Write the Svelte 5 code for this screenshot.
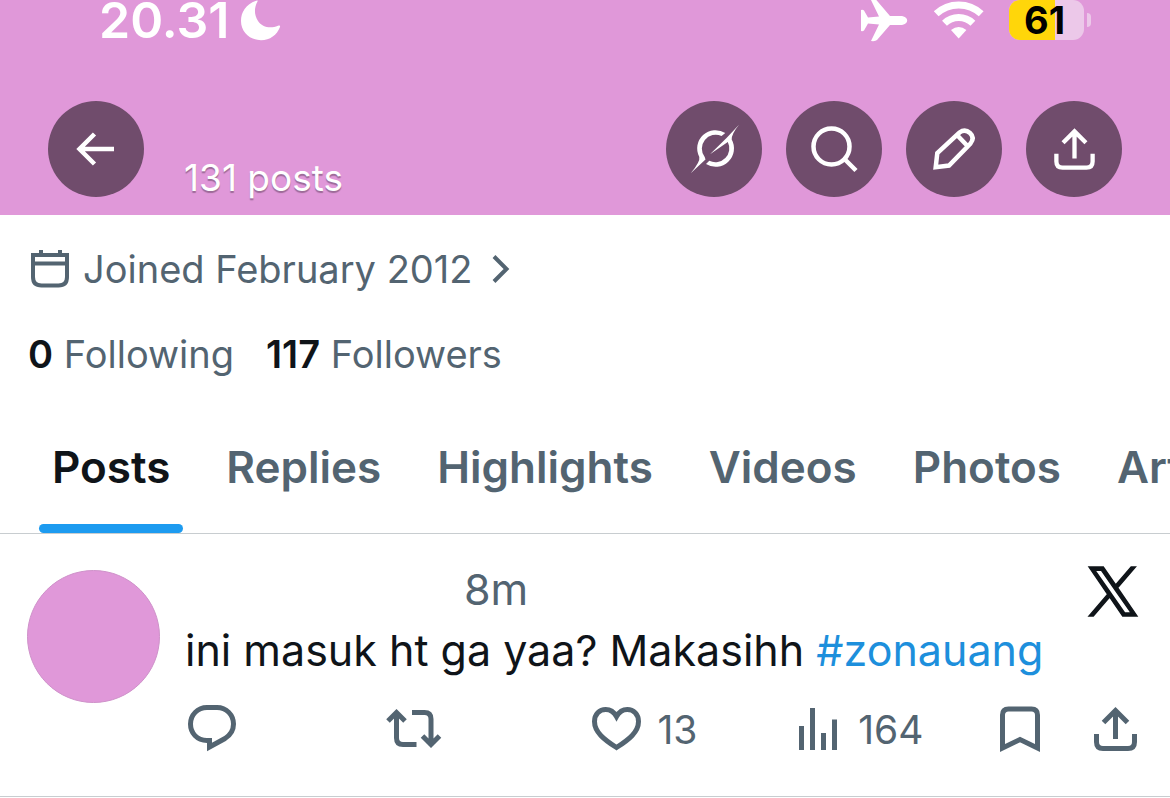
<script>
  const battery = 61;

  const tabs = ['Posts', 'Replies', 'Highlights', 'Videos', 'Photos', 'Articles'];
  let activeTab = $state('Posts');

  const profile = { posts: 131, joined: 'February 2012', following: 0, followers: 117 };
  const post = { age: '8m', text: 'ini masuk ht ga yaa? Makasihh', tag: 'zonauang', likes: 13, views: 164 };
</script>

{#snippet shareIcon()}
  <svg class="line" width="43" height="44" viewBox="0 0 43 44">
    <path d="M2.500 27v8q0 6.500 6.500 6.500h25q6.500 0 6.500-6.500v-8M21.500 4v28M9.500 15.500l12-12 12 12" />
  </svg>
{/snippet}

<header>
  <div class="status">
    <span class="time">20.31</span>
    <svg class="moon" width="40" height="41" viewBox="0 0 40 41">
      <path d="M16 .5C5 4 0 12 0 21c0 11 9 19.200 20 19.200 9 0 16-5.200 19-13.200.5-1.700-.5-1.800-2-1.200C29 29 21 27 17 21c-4-6-4-13-.5-19.500.3-1 .1-1.200-.5-1z" />
    </svg>
    <svg class="plane" width="47" height="42" viewBox="0 0 47 42">
      <path d="M9.500-1h5L29 16h12q5.200 1.300 5.200 4.500T41 25H29L16 40q-1.500 1.500-6 1l8-16.500-11-1-4 7q-1.200 1-3 .5V10q2-.5 3 .5l4 7 11-1z" />
    </svg>
    <svg class="wifi" width="50" height="39" viewBox="0 0 50 39">
      <path class="arc" d="M2.200 13.800A33 33 0 0 1 47.200 13.800M10.500 23.300A20.500 20.500 0 0 1 38.900 23.300" />
      <path d="M24.700 38.500 17 30q7.700-6 15.400 0z" />
    </svg>
    <div class="battery">
      <div class="cell">
        <div class="charge" style="width: {battery}%"></div>
        <span>{battery}</span>
      </div>
      <div class="nub"></div>
    </div>
  </div>

  <nav class="bar">
    <button class="round" aria-label="Back">
      <svg class="line" width="38" height="34" viewBox="0 0 38 34">
        <path d="M37 17H3.500M17.500 2l-15 15 15 15" />
      </svg>
    </button>
    <span class="count">{profile.posts} posts</span>
    <button class="round" aria-label="Profile summary">
      <svg width="50" height="50" viewBox="0 0 50 50">
        <path d="M36.300 9A18.300 18.300 0 0 0 10.300 33Q11.500 37.500 1.700 49.300L16.500 35.500 15.700 33A13.900 13.900 0 0 1 32.500 11.900z" />
        <path d="M50 .8Q42.500 10 42.700 15.600A18.300 18.300 0 0 1 17 40L20.300 36.800A13.900 13.900 0 0 0 38.800 18L21 30.300 37.500 14z" />
      </svg>
    </button>
    <button class="round" aria-label="Search">
      <svg class="line" width="47" height="47" viewBox="0 0 47 47">
        <circle cx="20.500" cy="20.500" r="18" />
        <path d="M33 32.500l12 12" />
      </svg>
    </button>
    <button class="round" aria-label="Edit profile">
      <svg class="line" width="42" height="42" viewBox="0 0 42 42">
        <path d="M2.700 39.200 4.300 25 26.500 4.500q5.500-4 10.500.5t.5 10.500L16 37.500zM24 7l11 11.500" />
      </svg>
    </button>
    <button class="round share" aria-label="Share profile">{@render shareIcon()}</button>
  </nav>
</header>

<section class="profile">
  <button class="joined">
    <svg class="line" width="39" height="40" viewBox="0 0 39 40">
      <path d="M3 6h34v22q0 8.500-8.500 8.500h-17Q3 36.500 3 28zM3 14.500h34M11 1v5M30 1v5" />
    </svg>
    <span>Joined {profile.joined}</span>
    <svg class="line" width="17" height="30" viewBox="0 0 17 30">
      <path d="M2 2.500 14.500 15 2 27.500" />
    </svg>
  </button>
  <div class="stats">
    <a href="#following"><b>{profile.following}</b> Following</a>
    <a href="#followers"><b>{profile.followers}</b> Followers</a>
  </div>
</section>

<div class="tabs" role="tablist">
  {#each tabs as tab}
    <button role="tab" class:active={activeTab === tab} aria-selected={activeTab === tab} onclick={() => (activeTab = tab)}>
      {tab}
    </button>
  {/each}
</div>

<article>
  <div class="avatar"></div>
  <div class="body">
    <div class="meta">
      <span class="age">{post.age}</span>
      <svg class="logo" width="48" height="49" viewBox="0 0 1200 1227">
        <path d="M714 519 1161 0H1055L667 451 357 0H0l468 682L0 1226h106l409-476 328 476h357zM569 688l-47-68L144 80h163l304 436 48 68 396 566H892z" />
      </svg>
    </div>
    <p>{post.text} <a href="#{post.tag}">#{post.tag}</a></p>
    <div class="actions">
      <button aria-label="Reply">
        <svg class="line" width="54" height="48" viewBox="-3 0 54 48">
          <path d="M21.500 35.500H19C9 35.500 2.500 28 2.500 19S9.500 2.500 19 2.500h10c9.500 0 16.500 7.500 16.500 16.500 0 6-3 11-8.500 14.500L21.500 42z" />
        </svg>
      </button>
      <button aria-label="Repost">
        <svg class="line" width="56" height="44" viewBox="3 0 56 44">
          <path d="M2 14l8.500-8.500L19 14M10.500 6.500V31q0 6.500 6.500 6.500h13.500M26 5.500h12.500q6.500 0 6.500 6.500v25M36.500 29l8.500 8.500 8.500-8.500" />
        </svg>
      </button>
      <button aria-label="Like">
        <svg class="line" width="49" height="46" viewBox="1 0 49 46">
          <path d="M24.500 41.500C12 33.500 2.500 26 2.500 15.500c0-7.500 5-12 11.200-12 5 0 8.300 2.500 10.800 7 2.500-4.500 5.800-7 10.800-7 6.200 0 11.200 4.500 11.200 12 0 10.500-9.500 18-22 26z" />
        </svg>
        <span>{post.likes}</span>
      </button>
      <button aria-label="Views">
        <svg class="line" width="46" height="44" viewBox="-3 0 46 44">
          <path d="M2.500 19v24M13.500 1v42M24.500 26v17M35.500 12.500V43" />
        </svg>
        <span>{post.views}</span>
      </button>
      <button class="save" aria-label="Bookmark">
        <svg class="line" width="40" height="47" viewBox="0 0 40 47">
          <path d="M2.500 42V9q0-6 6-6h23q6 0 6 6v33L20 33.500z" />
        </svg>
      </button>
      <button aria-label="Share post">{@render shareIcon()}</button>
    </div>
  </div>
</article>

<style>
  :global(body) {
    margin: 0;
    background: #fff;
    color: #0f1419;
    font-family: Inter, "Liberation Sans", sans-serif;
    overflow-x: hidden;
  }

  button {
    font: inherit;
    color: inherit;
    background: none;
    border: 0;
    padding: 0;
    cursor: pointer;
  }

  a {
    color: inherit;
    text-decoration: none;
  }

  svg {
    display: block;
    flex: none;
    fill: currentColor;
    overflow: visible;
  }

  .line {
    fill: none;
    stroke: currentColor;
    stroke-width: 5;
  }

  header {
    background: #e098d9;
    color: #fff;
    padding-bottom: 18px;
  }

  .status {
    display: flex;
    align-items: flex-start;
    height: 40px;
    padding: 0 79px 0 99px;
  }

  .time {
    font-size: 50px;
    font-weight: 600;
    line-height: 40px;
  }

  .moon {
    margin-left: 12px;
  }

  .plane {
    margin-left: auto;
    overflow: hidden;
  }

  .wifi {
    margin: 0 25px 0 26px;
  }

  .wifi .arc {
    fill: none;
    stroke: currentColor;
    stroke-width: 7;
  }

  .battery {
    display: flex;
    align-items: center;
    gap: 3px;
  }

  .cell {
    position: relative;
    box-sizing: border-box;
    width: 75px;
    height: 40px;
    padding-right: 4px;
    border-radius: 11px;
    overflow: hidden;
    background: #ecc8e9;
    color: #000;
    text-align: center;
  }

  .charge {
    position: absolute;
    inset: 0 auto 0 0;
    background: #ffd60a;
  }

  .cell span {
    position: relative;
    font-size: 38px;
    font-weight: 700;
    line-height: 40px;
  }

  .nub {
    width: 4px;
    height: 14px;
    border-radius: 0 6px 6px 0;
    background: #ecc8e9;
  }

  .bar {
    display: flex;
    align-items: center;
    gap: 24px;
    padding: 61px 48px 0;
  }

  .round {
    display: flex;
    align-items: center;
    justify-content: center;
    width: 96px;
    height: 96px;
    border-radius: 50%;
    background: #704c6c;
  }

  .round .line {
    stroke-width: 4.5;
  }

  .share :global(svg) {
    width: 41px;
    height: 42px;
  }

  .count {
    flex: 1;
    align-self: flex-end;
    padding-left: 16px;
    font-size: 37px;
    line-height: 38px;
    text-shadow: 0 2px 1px rgba(0, 0, 0, 0.3);
  }

  .profile {
    padding: 31px 28px 0 30px;
    font-size: 38px;
    line-height: 46px;
    color: #536471;
  }

  .joined {
    display: flex;
    align-items: center;
    gap: 14px;
  }

  .joined span {
    margin-right: 6px;
  }

  .joined .line {
    stroke-width: 4;
  }

  .stats {
    display: flex;
    gap: 32px;
    margin: 39px 0 0 -2px;
  }

  .stats b {
    font-weight: 600;
    color: #0f1419;
  }

  .tabs {
    display: flex;
    gap: 30px;
    margin-top: 39px;
    padding-left: 39px;
    overflow: hidden;
    border-bottom: 1px solid #c8cdd0;
  }

  .tabs button {
    flex: none;
    padding: 24px 13px 30px;
    border-bottom: 9px solid transparent;
    font-size: 44px;
    font-weight: 600;
    line-height: 54px;
    color: #536471;
    position: relative;
  }

  .tabs .active {
    color: #0f1419;
  }

  .tabs .active::after {
    content: "";
    position: absolute;
    inset: auto 0 -9px;
    height: 9px;
    border-radius: 5px;
    background: #1d9bf0;
  }

  article {
    display: flex;
    gap: 25px;
    padding: 30px 33px 42px 27px;
    border-bottom: 1px solid #c8cdd0;
  }

  .avatar {
    flex: none;
    box-sizing: border-box;
    width: 133px;
    height: 133px;
    margin-top: 6px;
    border: 1px solid #cf92ca;
    border-radius: 50%;
    background: #e098d9;
  }

  .body {
    flex: 1;
    min-width: 0;
    font-size: 43px;
  }

  .meta {
    display: flex;
    align-items: flex-start;
    justify-content: space-between;
    padding-left: 279px;
    line-height: 51px;
  }

  .logo {
    margin-top: 3px;
    stroke: currentColor;
    stroke-width: 36;
  }

  .age {
    color: #536471;
  }

  p {
    margin: 0;
    line-height: 68px;
  }

  p a {
    color: #1d8fdc;
  }

  .actions {
    display: grid;
    grid-template-columns: repeat(4, 1fr) auto auto;
    align-items: center;
    height: 50px;
    margin-top: 20px;
    font-size: 39px;
    color: #536471;
  }

  .actions button {
    display: flex;
    align-items: center;
    gap: 16px;
  }

  .actions .save {
    margin-right: 54px;
  }
</style>
